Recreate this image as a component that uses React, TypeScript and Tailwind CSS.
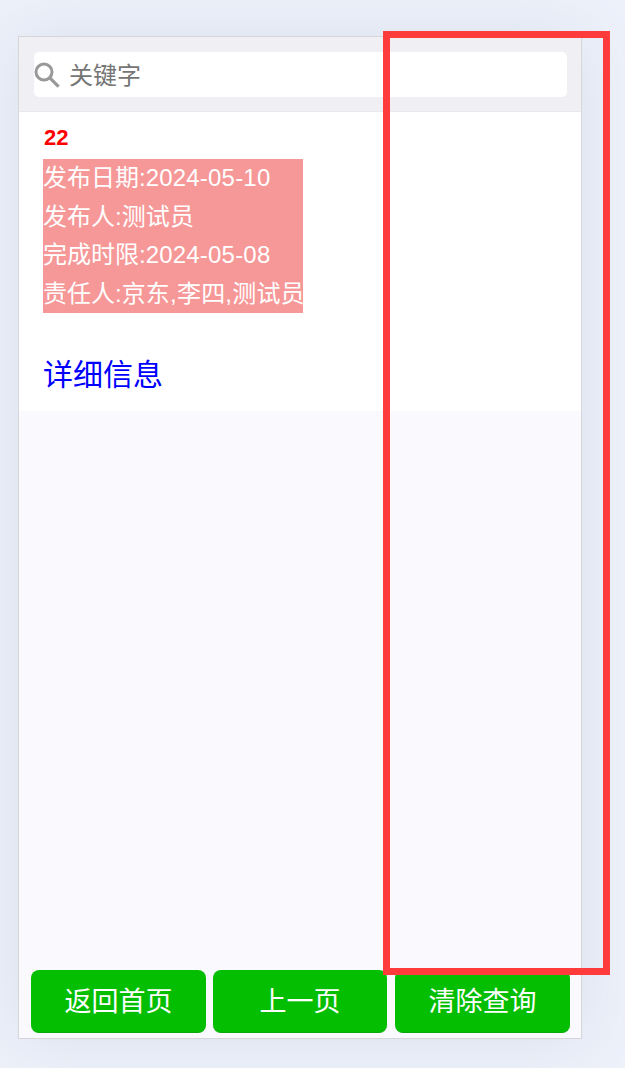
const font = "[font-family:'Liberation_Sans','Noto_Sans_CJK_SC',sans-serif]"

const infoLines = [
    { label: "发布日期:", value: "2024-05-10" },
    { label: "发布人:", value: "测试员" },
    { label: "完成时限:", value: "2024-05-08" },
    { label: "责任人:", value: "京东,李四,测试员" },
]

const SearchGlyph = () => (
    <svg viewBox="0 0 26 26" className="h-[26px] w-[26px]" fill="none" stroke="#999999">
        <circle cx="10" cy="10" r="8" strokeWidth="3" />
        <path d="M15.8 15.8 L24.6 24.6" strokeWidth="3.2" />
    </svg>
)

export default function App() {
    return (
        <div className={`relative h-[1068px] w-[625px] overflow-hidden bg-[#edf1fa] pl-[18px] pt-[36px] ${font}`}>
            <div className="flex h-[1003px] w-[564px] flex-col border border-[#d6d6da] bg-[#faf9fe] shadow-[0_0_60px_#d9e0ec]">
                <div className="border-b border-[#e9e9ed] bg-[#efeff4] px-[15px] pb-[14px] pt-[15px]">
                    <div className="flex h-[45px] w-[533px] items-center rounded-[5px] bg-white">
                        <SearchGlyph />
                        <span className="ml-[9px] pt-[2px] text-[24px] leading-none text-[#757575]">关键字</span>
                    </div>
                </div>

                <div className="bg-white pb-[14px] pl-[24px] pt-[13px]">
                    <div className="ml-[1px] text-[22px] font-bold leading-[26px] text-[#ff0000]">22</div>
                    <div className="mt-[8px] h-[154px] w-[260px] bg-[#f69898] text-[24px] leading-[38.5px] text-white">
                        {infoLines.map((line) => (
                            <div key={line.label} className="whitespace-nowrap">
                                {line.label}
                                <span className="tracking-[0.2px]">{line.value}</span>
                            </div>
                        ))}
                    </div>
                    <a className="mt-[40px] block text-[30px] leading-[44px] text-[#0000ff]">详细信息</a>
                </div>

                <div className="flex-1" />

                <div className="flex pb-[5px] pl-[12px]">
                    <button className="h-[63px] w-[175px] rounded-[8px] border-b border-[#0ca80c] bg-[#04be02] pt-[2px] text-[27px] text-white">返回首页</button>
                    <button className="ml-[7px] h-[63px] w-[174px] rounded-[8px] border-b border-[#0ca80c] bg-[#04be02] pt-[2px] text-[27px] text-white">上一页</button>
                    <button className="ml-[8px] h-[63px] w-[175px] rounded-[8px] border-b border-[#0ca80c] bg-[#04be02] pt-[2px] text-[27px] text-white">清除查询</button>
                </div>
            </div>

            {/* red annotation frame over the page */}
            <div className="absolute left-[383px] top-[31px] h-[944px] w-[227px] border-[7px] border-[#ff3b3b]" />
        </div>
    )
}
